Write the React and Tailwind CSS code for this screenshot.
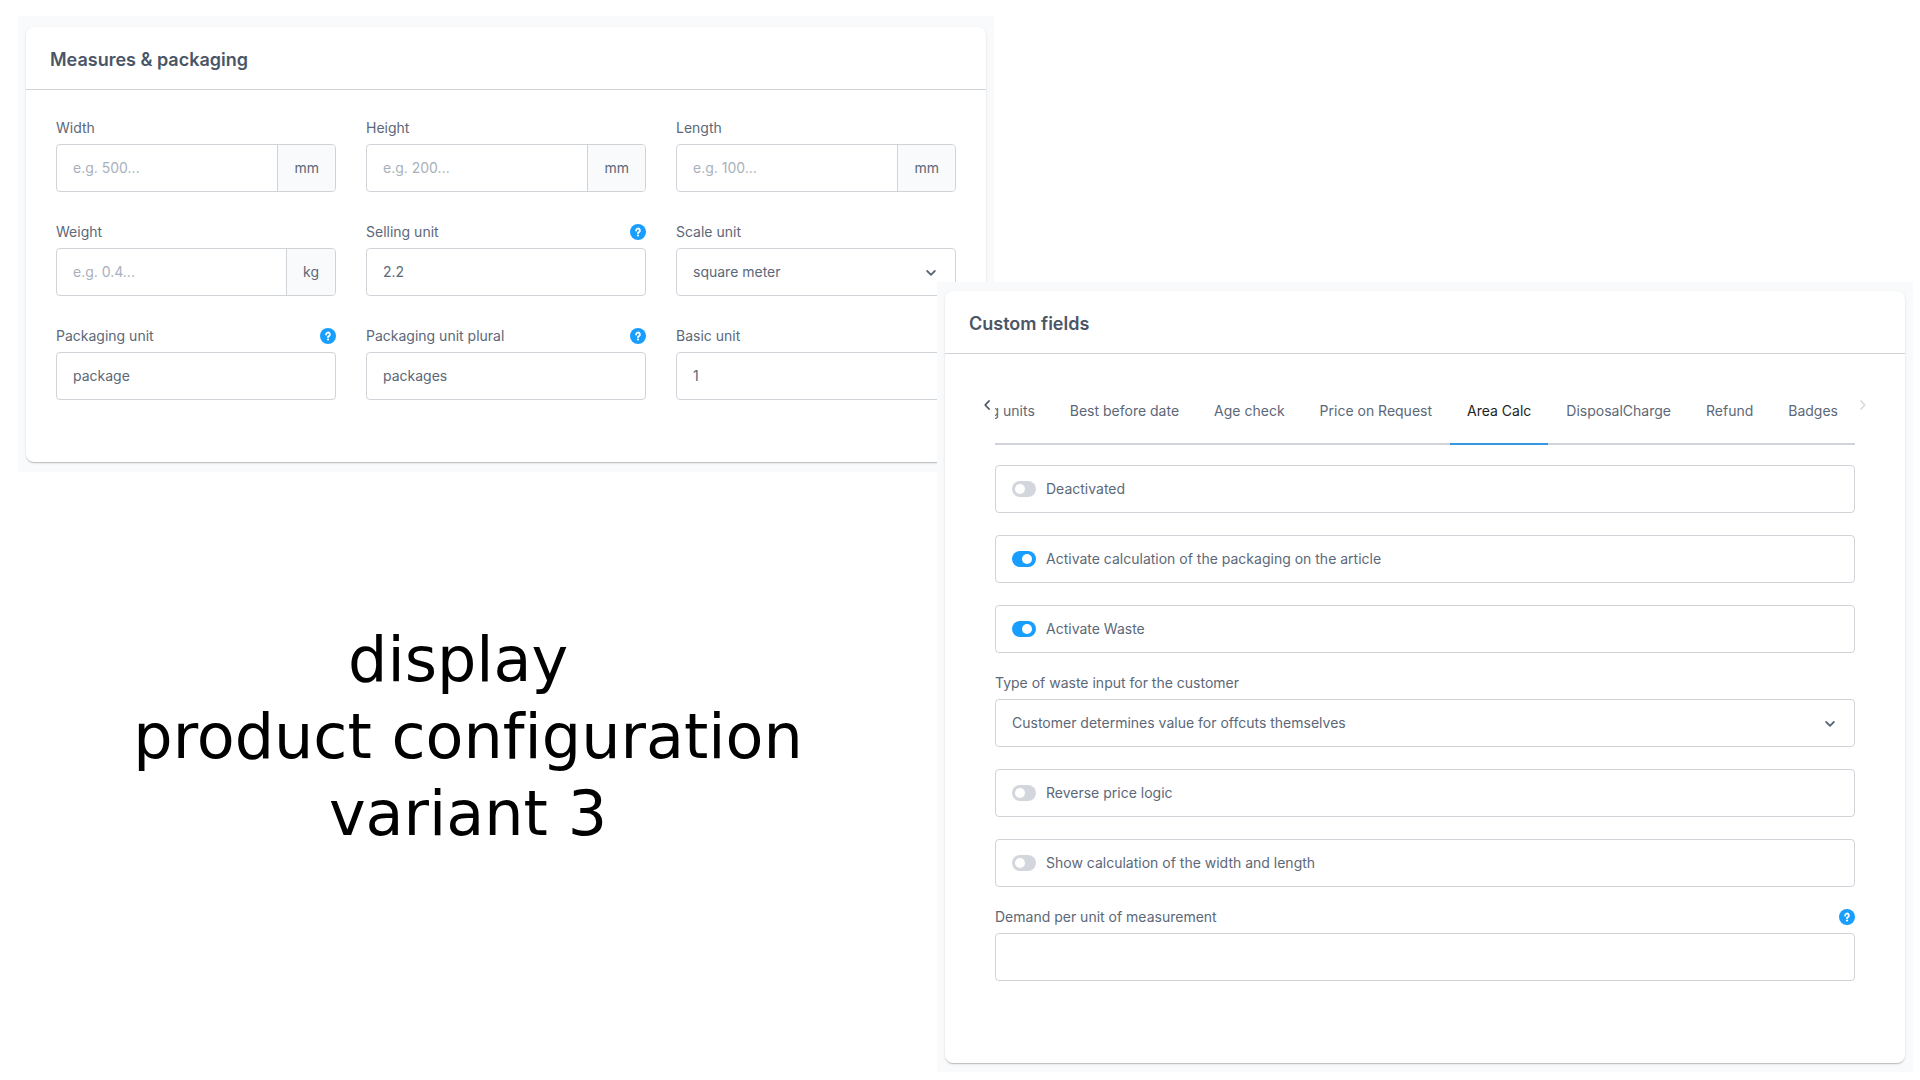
import React, { useState } from "react";

const tabs = [
  "Packaging units",
  "Best before date",
  "Age check",
  "Price on Request",
  "Area Calc",
  "DisposalCharge",
  "Refund",
  "Badges",
];

const box = "h-12 w-full rounded-[4px] border border-[#d0d4d8] bg-white";

function Card(props) {
  return (
    <section className={`bg-[#f9fafb] px-2 ${props.className}`}>
      <div className="rounded-lg bg-white shadow-[0_1px_1px_rgba(0,0,0,0.08),0_2px_1px_-1px_rgba(0,0,0,0.12),0_1px_3px_rgba(0,0,0,0.1)]">
        <h2 className="border-b border-[#d0d4d8] px-6 pt-[21px] pb-[17px] text-lg leading-6 font-semibold text-[#4a5666]">
          {props.title}
        </h2>
        {props.children}
      </div>
    </section>
  );
}

function Label(props) {
  return (
    <div className="mb-2 flex h-4 items-center justify-between">
      <label htmlFor={props.id}>{props.children}</label>
      {props.help && (
        <button
          type="button"
          aria-label="Help"
          className="flex size-4 items-center justify-center rounded-full bg-[#189eff] text-white"
        >
          <svg viewBox="0 0 16 16" className="size-4" fill="none">
            <path
              d="M6.1 6.5a1.9 1.9 0 1 1 2.8 1.6c-.6.3-.9.6-.9 1.1"
              stroke="currentColor"
              strokeWidth="1.8"
              strokeLinecap="round"
            />
            <circle cx="8" cy="11.5" r="1.1" fill="currentColor" />
          </svg>
        </button>
      )}
    </div>
  );
}

function TextField(props) {
  return (
    <div>
      <Label id={props.id} help={props.help}>
        {props.label}
      </Label>
      <div className={`${box} flex overflow-hidden`}>
        <input
          id={props.id}
          type="text"
          defaultValue={props.value}
          placeholder={props.placeholder}
          className="w-0 min-w-0 flex-1 px-4 outline-none placeholder:text-[#a9b1bb]"
        />
        {props.unit && (
          <span className="flex items-center border-l border-[#d0d4d8] bg-[#f9fafb] px-4">
            {props.unit}
          </span>
        )}
      </div>
    </div>
  );
}

function SelectField(props) {
  return (
    <div>
      <Label id={props.id}>{props.label}</Label>
      <div className="relative">
        <select
          id={props.id}
          className={`${box} appearance-none px-4 outline-none`}
        >
          <option>{props.value}</option>
        </select>
        <svg
          viewBox="0 0 10 6"
          className="pointer-events-none absolute top-[22px] right-5 h-[6px] w-[10px]"
          fill="none"
          stroke="currentColor"
          strokeWidth="1.8"
          strokeLinecap="round"
          strokeLinejoin="round"
        >
          <path d="M1.2 1 5 4.8 8.8 1" />
        </svg>
      </div>
    </div>
  );
}

function Switch(props) {
  return (
    <label className={`${box} flex items-center gap-[10px] px-4`}>
      <input
        type="checkbox"
        defaultChecked={props.on}
        className="h-4 w-6 shrink-0 appearance-none rounded-full bg-[#d3d7dd] p-[3px] before:block before:size-[10px] before:rounded-full before:bg-white checked:bg-[#189eff] checked:before:translate-x-[7px]"
      />
      {props.children}
    </label>
  );
}

function Arrow(props) {
  return (
    <button
      type="button"
      aria-label={props.label}
      disabled={props.disabled}
      className="mt-[10px] flex h-6 w-4 items-center justify-center text-[#4a5666] disabled:text-[#d8dbdf]"
    >
      <svg
        viewBox="0 0 6 10"
        className="h-[10px] w-[6px]"
        fill="none"
        stroke="currentColor"
        strokeWidth="1.8"
        strokeLinecap="round"
        strokeLinejoin="round"
      >
        <path d={props.path} />
      </svg>
    </button>
  );
}

export default function App() {
  const [active, setActive] = useState("Area Calc");

  return (
    <main className="grid grid-cols-[minmax(0,1fr)_57px_minmax(0,1fr)] grid-rows-[266px_190px_auto] bg-white pt-4 pr-[7px] pb-2 pl-[18px] font-['Inter',sans-serif] text-sm leading-4 text-[#5c6878]">
      {/* Measures */}
      <Card
        title="Measures & packaging"
        className="col-span-2 col-start-1 row-span-2 row-start-1 pt-[11px] pb-[10px]"
      >
        <form className="grid grid-cols-3 gap-x-[30px] gap-y-8 px-[30px] pt-[30px] pb-[62px]">
          <TextField id="width" label="Width" placeholder="e.g. 500..." unit="mm" />
          <TextField id="height" label="Height" placeholder="e.g. 200..." unit="mm" />
          <TextField id="length" label="Length" placeholder="e.g. 100..." unit="mm" />
          <TextField id="weight" label="Weight" placeholder="e.g. 0.4..." unit="kg" />
          <TextField id="selling" label="Selling unit" value="2.2" help />
          <SelectField id="scale" label="Scale unit" value="square meter" />
          <TextField id="pack" label="Packaging unit" value="package" help />
          <TextField
            id="packPlural"
            label="Packaging unit plural"
            value="packages"
            help
          />
          <TextField id="basic" label="Basic unit" value="1" />
        </form>
      </Card>

      {/* Custom fields */}
      <Card
        title="Custom fields"
        className="z-10 col-span-2 col-start-2 row-span-2 row-start-2 pt-[9px] pb-[9px]"
      >
        <div className="flex px-[34px] pt-[29px]">
          <Arrow label="Previous tabs" path="M5 1 1.2 5 5 9" />
          <div
            role="tablist"
            className="flex min-w-0 flex-1 justify-end gap-px overflow-hidden shadow-[inset_0_-2px_0_#d0d4d8]"
          >
            {tabs.map((tab) => (
              <button
                key={tab}
                type="button"
                role="tab"
                aria-selected={tab === active}
                onClick={() => setActive(tab)}
                className={`shrink-0 border-b-2 px-[17px] pt-5 pb-6 whitespace-nowrap ${
                  tab === active
                    ? "border-[#3598e0] text-[#1c1f23]"
                    : "border-transparent"
                }`}
              >
                {tab}
              </button>
            ))}
          </div>
          <Arrow label="Next tabs" path="M1 1 4.8 5 1 9" disabled />
        </div>
        <form className="flex flex-col gap-[22px] px-[50px] pt-5 pb-[82px]">
          <Switch>Deactivated</Switch>
          <Switch on>Activate calculation of the packaging on the article</Switch>
          <Switch on>Activate Waste</Switch>
          <SelectField
            id="waste"
            label="Type of waste input for the customer"
            value="Customer determines value for offcuts themselves"
          />
          <Switch>Reverse price logic</Switch>
          <Switch>Show calculation of the width and length</Switch>
          <TextField id="demand" label="Demand per unit of measurement" help />
        </form>
      </Card>

      {/* Caption */}
      <h1 className="col-start-1 row-start-3 mt-[149px] mr-[19px] text-center font-['DejaVu_Sans',sans-serif] text-[62px] leading-[77px] whitespace-pre text-black [font-variant-ligatures:none]">
        {"display \nproduct configuration\nvariant 3"}
      </h1>
    </main>
  );
}
